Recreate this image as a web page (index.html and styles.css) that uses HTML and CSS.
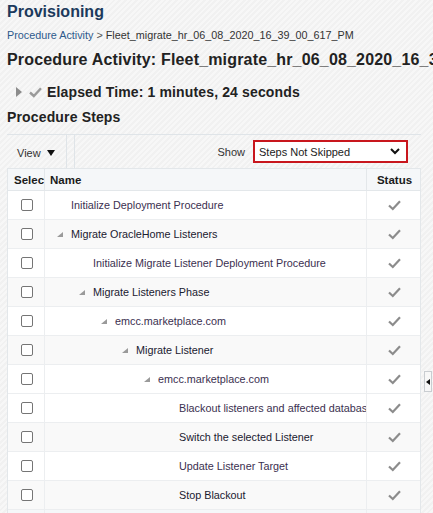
FILE: index.html
```html
<!DOCTYPE html>
<html>
<head>
<meta charset="utf-8">
<link rel="stylesheet" href="styles.css">
</head>
<body>
<div class="page">
  <h1 class="title">Provisioning</h1>
  <div class="crumb"><span class="crumb-link">Procedure Activity</span> <span class="crumb-sep">&gt;</span> Fleet_migrate_hr_06_08_2020_16_39_00_617_PM</div>
  <h2 class="heading">Procedure Activity: Fleet_migrate_hr_06_08_2020_16_39_00_617_PM</h2>
  <div class="elapsed">
    <svg class="disclose" width="6" height="10" viewBox="0 0 6 10"><path d="M0 0 L6 5 L0 10 Z" fill="#8c8c8c"/></svg>
    <svg class="elapsed-check" width="13" height="11" viewBox="0 0 13 11"><path d="M1 5.5 L4.8 9 L12 1.2" fill="none" stroke="#9a9a9a" stroke-width="2.4"/></svg>
    <span>Elapsed Time: 1 minutes, 24 seconds</span>
  </div>
  <h3 class="steps-title">Procedure Steps</h3>

  <div class="toolbar">
    <div class="view">View
      <svg width="8" height="6" viewBox="0 0 8 6"><path d="M0 0 L8 0 L4 6 Z" fill="#111"/></svg>
    </div>
    <div class="sep"></div>
    <div class="sep"></div>
    <div class="show">
      <span class="show-label">Show</span>
      <div class="select">
        <span>Steps Not Skipped</span>
        <svg width="10" height="7" viewBox="0 0 10 7"><path d="M1 1 L5 5 L9 1" fill="none" stroke="#111" stroke-width="2"/></svg>
      </div>
    </div>
  </div>

  <div class="grid">
    <div class="row head">
      <div class="c sel">Select</div>
      <div class="c name">Name</div>
      <div class="c status">Status</div>
    </div>

    <div class="row">
      <div class="c sel"><span class="box"></span></div>
      <div class="c name l0"><span class="tw"></span>Initialize Deployment Procedure</div>
      <div class="c status"><svg class="ok" width="13" height="11" viewBox="0 0 13 11"><path d="M1 5.5 L4.8 9 L12 1.2" fill="none" stroke="#8c8c8c" stroke-width="2.2"/></svg></div>
    </div>
    <div class="row alt">
      <div class="c sel"><span class="box"></span></div>
      <div class="c name l0"><span class="tw on"></span>Migrate OracleHome Listeners</div>
      <div class="c status"><svg class="ok" width="13" height="11" viewBox="0 0 13 11"><path d="M1 5.5 L4.8 9 L12 1.2" fill="none" stroke="#8c8c8c" stroke-width="2.2"/></svg></div>
    </div>
    <div class="row">
      <div class="c sel"><span class="box"></span></div>
      <div class="c name l1"><span class="tw"></span>Initialize Migrate Listener Deployment Procedure</div>
      <div class="c status"><svg class="ok" width="13" height="11" viewBox="0 0 13 11"><path d="M1 5.5 L4.8 9 L12 1.2" fill="none" stroke="#8c8c8c" stroke-width="2.2"/></svg></div>
    </div>
    <div class="row alt">
      <div class="c sel"><span class="box"></span></div>
      <div class="c name l1"><span class="tw on"></span>Migrate Listeners Phase</div>
      <div class="c status"><svg class="ok" width="13" height="11" viewBox="0 0 13 11"><path d="M1 5.5 L4.8 9 L12 1.2" fill="none" stroke="#8c8c8c" stroke-width="2.2"/></svg></div>
    </div>
    <div class="row">
      <div class="c sel"><span class="box"></span></div>
      <div class="c name l2"><span class="tw on"></span>emcc.marketplace.com</div>
      <div class="c status"><svg class="ok" width="13" height="11" viewBox="0 0 13 11"><path d="M1 5.5 L4.8 9 L12 1.2" fill="none" stroke="#8c8c8c" stroke-width="2.2"/></svg></div>
    </div>
    <div class="row alt">
      <div class="c sel"><span class="box"></span></div>
      <div class="c name l3"><span class="tw on"></span>Migrate Listener</div>
      <div class="c status"><svg class="ok" width="13" height="11" viewBox="0 0 13 11"><path d="M1 5.5 L4.8 9 L12 1.2" fill="none" stroke="#8c8c8c" stroke-width="2.2"/></svg></div>
    </div>
    <div class="row">
      <div class="c sel"><span class="box"></span></div>
      <div class="c name l4"><span class="tw on"></span>emcc.marketplace.com</div>
      <div class="c status"><svg class="ok" width="13" height="11" viewBox="0 0 13 11"><path d="M1 5.5 L4.8 9 L12 1.2" fill="none" stroke="#8c8c8c" stroke-width="2.2"/></svg></div>
    </div>
    <div class="row alt2">
      <div class="c sel"><span class="box"></span></div>
      <div class="c name l5"><span class="tw"></span>Blackout listeners and affected databases</div>
      <div class="c status"><svg class="ok" width="13" height="11" viewBox="0 0 13 11"><path d="M1 5.5 L4.8 9 L12 1.2" fill="none" stroke="#8c8c8c" stroke-width="2.2"/></svg></div>
    </div>
    <div class="row alt">
      <div class="c sel"><span class="box"></span></div>
      <div class="c name l5"><span class="tw"></span>Switch the selected Listener</div>
      <div class="c status"><svg class="ok" width="13" height="11" viewBox="0 0 13 11"><path d="M1 5.5 L4.8 9 L12 1.2" fill="none" stroke="#8c8c8c" stroke-width="2.2"/></svg></div>
    </div>
    <div class="row">
      <div class="c sel"><span class="box"></span></div>
      <div class="c name l5"><span class="tw"></span>Update Listener Target</div>
      <div class="c status"><svg class="ok" width="13" height="11" viewBox="0 0 13 11"><path d="M1 5.5 L4.8 9 L12 1.2" fill="none" stroke="#8c8c8c" stroke-width="2.2"/></svg></div>
    </div>
    <div class="row alt">
      <div class="c sel"><span class="box"></span></div>
      <div class="c name l5"><span class="tw"></span>Stop Blackout</div>
      <div class="c status"><svg class="ok" width="13" height="11" viewBox="0 0 13 11"><path d="M1 5.5 L4.8 9 L12 1.2" fill="none" stroke="#8c8c8c" stroke-width="2.2"/></svg></div>
    </div>
    <div class="row tail">
      <div class="c sel"></div>
      <div class="c name"></div>
      <div class="c status"></div>
    </div>
  </div>
</div>
<div class="splitter"><svg width="4" height="6" viewBox="0 0 4 6"><path d="M4 0 L0 3 L4 6 Z" fill="#111"/></svg></div>
</body>
</html>
```
FILE: styles.css
```css
html, body {
  margin: 0;
  padding: 0;
  height: 100%;
  overflow: hidden;
}
body {
  font-family: "Liberation Sans", Arial, sans-serif;
  color: #222;
  background-color: #f3f3f3;
  background-image: repeating-linear-gradient(135deg, #f1f1f1 0px, #f1f1f1 2px, #f7f7f7 2px, #f7f7f7 4px);
  position: relative;
}
.page {
  padding-left: 7px;
  width: 414px;
}
.title {
  margin: 0;
  padding-top: 2px;
  font-size: 16px;
  line-height: 20px;
  font-weight: bold;
  color: #1c3a5c;
}
.crumb {
  margin-top: 6px;
  font-size: 10.8px;
  line-height: 14px;
  color: #333;
  white-space: nowrap;
}
.crumb-link { color: #2e5a8c; }
.crumb-sep { color: #555; }
.heading {
  margin: 8px 0 0;
  font-size: 16px;
  line-height: 20px;
  font-weight: bold;
  letter-spacing: 0.17px;
  color: #222;
  white-space: nowrap;
}
.elapsed {
  margin-top: 13px;
  height: 18px;
  display: flex;
  align-items: center;
  padding-left: 9px;
  font-size: 14px;
  line-height: 18px;
  font-weight: bold;
  letter-spacing: 0.14px;
  color: #222;
}
.elapsed .disclose { margin-right: 7px; }
.elapsed .elapsed-check { margin-right: 5px; }
.steps-title {
  margin: 7px 0 0;
  font-size: 14px;
  line-height: 18px;
  font-weight: bold;
  letter-spacing: 0.15px;
  color: #222;
}
.toolbar {
  margin-top: 8px;
  border-top: 1px solid #dfe4e8;
  height: 33px;
  display: flex;
  align-items: stretch;
  font-size: 11px;
  color: #333;
}
.view {
  width: 59px;
  padding-left: 10px;
  box-sizing: border-box;
  display: flex;
  align-items: center;
  gap: 6px;
  padding-top: 2px;
}
.view svg { margin-top: 1px; }
.sep {
  width: 1px;
  background: #dfe4e8;
  margin-right: 7px;
}
.show {
  flex: 1;
  display: flex;
  align-items: flex-start;
  justify-content: flex-end;
  padding-right: 13px;
  gap: 8px;
}
.show-label {
  margin-top: 11px;
  line-height: 13px;
  color: #333;
}
.select {
  margin-top: 5px;
  width: 155px;
  height: 23px;
  box-sizing: border-box;
  border: 2px solid #c8161d;
  background: #fff;
  display: flex;
  align-items: center;
  justify-content: space-between;
  padding: 0 6px 0 4px;
  color: #222;
}
.grid {
  border-left: 1px solid #e3e7ea;
  border-right: 1px solid #e3e7ea;
  background: #fff;
}
.row {
  display: grid;
  grid-template-columns: 37px 322px 53px;
  height: 29px;
  border-bottom: 1px solid #eceef0;
  box-sizing: border-box;
  font-size: 10.8px;
  color: #3b3050;
}
.row.alt { background: #f9f9f9; color: #1a2030; }
.row.alt2 { background: #fff; color: #3b3050; }
.row.head {
  height: 23px;
  border-top: 1px solid #e3e7ea;
  border-bottom: 1px solid #e3e7ea;
  background: #f5f7f9;
  font-size: 11.5px;
  font-weight: bold;
  color: #1b1b1b;
}
.row.tail { height: 5px; border-bottom: none; background: #f5f7f9; }
.c {
  display: flex;
  align-items: center;
  overflow: hidden;
  white-space: nowrap;
  border-right: 1px solid #eceef0;
  min-width: 0;
}
.row.head .c { border-right-color: #e3e7ea; }
.c.status { border-right: none; justify-content: center; }
.row.head .sel { padding-left: 6px; }
.row.head .name { padding-left: 5px; }
.row.head .status { padding-left: 2px; }
.sel { justify-content: flex-start; }
.box {
  margin-left: 13px;
  width: 10px;
  height: 10px;
  border: 1px solid #757575;
  border-radius: 2px;
  background: #fff;
}
.name { padding-left: 12px; }
.l1 { padding-left: 34px; }
.l2 { padding-left: 56px; }
.l3 { padding-left: 77px; }
.l4 { padding-left: 99px; }
.l5 { padding-left: 120px; }
.tw {
  width: 6px;
  height: 5px;
  margin-right: 8px;
  margin-top: 1px;
  flex: none;
}
.tw.on {
  background: #9a9a9a;
  clip-path: polygon(100% 0, 100% 100%, 0 100%);
}
.ok { margin-left: 1px; }
.splitter {
  position: absolute;
  left: 424px;
  top: 371px;
  width: 5px;
  height: 19px;
  border: 1px solid #c9cdd1;
  background: #f7f7f7;
  display: flex;
  align-items: center;
  justify-content: flex-start;
  padding-left: 1px;
}
```
